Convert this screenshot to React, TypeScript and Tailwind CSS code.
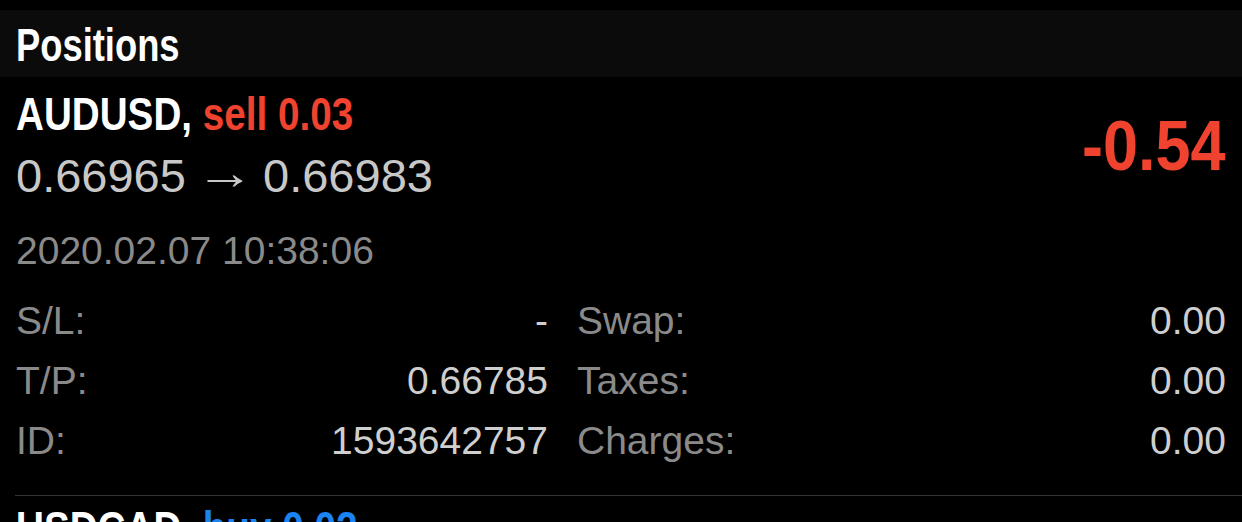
import React from "react";

type Row = { label: string; value: string };

const leftRows: Row[] = [
  { label: "S/L:", value: "-" },
  { label: "T/P:", value: "0.66785" },
  { label: "ID:", value: "1593642757" },
];

const rightRows: Row[] = [
  { label: "Swap:", value: "0.00" },
  { label: "Taxes:", value: "0.00" },
  { label: "Charges:", value: "0.00" },
];

// no condensed face installed, so the bold headings get squeezed horizontally
const heading = "font-['Liberation_Sans_Narrow','Liberation_Sans',Arial,sans-serif] font-bold";

const DetailColumn: React.FC<{ rows: Row[]; className?: string }> = ({ rows, className }) => (
  <div className={className}>
    {rows.map((r) => (
      <div key={r.label} className="flex justify-between h-[60px] leading-[60px]">
        <span className="text-[#8a8a8a]">{r.label}</span>
        <span className="text-[#cfcfcf]">{r.value}</span>
      </div>
    ))}
  </div>
);

export default function App() {
  return (
    <div className="w-[1242px] h-[522px] overflow-hidden bg-black pt-[10px] font-['Liberation_Sans',Arial,sans-serif]">
      <div className="h-[67px] bg-[#0b0b0b] px-4 pt-[3px] flex items-center">
        <h1 className={`${heading} inline-block origin-left scale-x-[0.79] text-[46px] leading-none text-white whitespace-nowrap`}>
          Positions
        </h1>
      </div>

      <div className="px-4 pt-[11px]">
        <div className="flex items-center justify-between">
          <div>
            <div className="h-[52px]">
              <span className={`${heading} inline-block origin-left scale-x-[0.84] text-[46px] leading-[52px] text-white whitespace-nowrap`}>
                AUDUSD, <span className="text-[#f0432f]">sell 0.03</span>
              </span>
            </div>
            <div className="mt-[8px] text-[47px] leading-[56px] text-[#c8c8c8] whitespace-nowrap">
              0.66965{" "}
              <span className="inline-block origin-center scale-x-[1.25] mx-[2px] -translate-y-[3px]">→</span>{" "}
              0.66983
            </div>
          </div>
          <div className={`${heading} inline-block origin-right scale-x-[0.9] text-[70px] leading-none text-[#f0432f]`}>
            -0.54
          </div>
        </div>

        <div className="mt-[24px] text-[39px] leading-[46px] text-[#8a8a8a]">2020.02.07 10:38:06</div>

        <div className="mt-[17px] flex text-[39px] gap-[29px]">
          <DetailColumn rows={leftRows} className="w-[532px]" />
          <DetailColumn rows={rightRows} className="flex-1" />
        </div>
      </div>

      <div className="ml-[15px] mt-[24px] border-t border-[#333333]" />

      <div className="px-4 mt-[6px] h-[52px]">
        <span className={`${heading} inline-block origin-left scale-x-[0.84] text-[46px] leading-[52px] text-white whitespace-nowrap`}>
          USDCAD, <span className="text-[#1a84f0]">buy 0.02</span>
        </span>
      </div>
    </div>
  );
}
